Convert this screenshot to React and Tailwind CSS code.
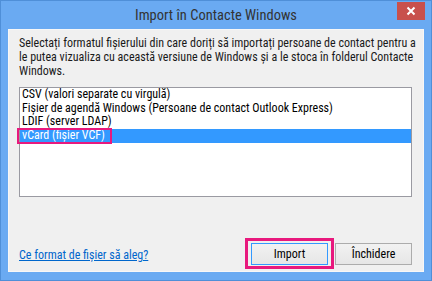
import React from "react";

export default function App() {
  const font = { fontFamily: 'Roboto, "Noto Sans", sans-serif' };
  return (
    <div
      className="w-[432px] h-[281px] bg-[#6aaaf2] border border-[#4f8fd8] flex flex-col overflow-hidden font-stretch-condensed"
      style={font}
    >
      {/* Title bar */}
      <div className="h-[28px] flex items-start shrink-0">
        <div className="flex-1 text-center text-[14.5px] leading-[29px] text-[#333333] pl-[34px]">
          Import în Contacte Windows
        </div>
        <div className="w-[28px] h-[18px] mt-[1px] mr-[6px] bg-[#c8504c] flex items-center justify-center">
          <svg width="10" height="10" viewBox="0 0 10 10">
            <path d="M1.5 1.5 L8.5 8.5 M8.5 1.5 L1.5 8.5" stroke="#fff" strokeWidth="2" />
          </svg>
        </div>
      </div>
      {/* Client */}
      <div className="flex-1 mx-[7px] mb-[8px] bg-[#f0f0f0] border border-[#f7f7f7] flex flex-col pl-[10px] pr-[11px] pt-[6px] pb-[2px]">
        <div className="text-[12px] leading-[14px] text-[#1a1a1a] whitespace-nowrap">
          Selectați formatul fișierului din care doriți să importați persoane de contact pentru a
          <br />
          le putea vizualiza cu această versiune de Windows și a le stoca în folderul Contacte
          <br />
          Windows.
        </div>
        <div className="mt-[9px] h-[110px] bg-white border border-[#9a9aa2] text-[12px] leading-[13.7px] text-black">
          <div className="px-[2px] h-[13.7px]">CSV (valori separate cu virgulă)</div>
          <div className="px-[2px] h-[13.7px]">Fișier de agendă Windows (Persoane de contact Outlook Express)</div>
          <div className="px-[2px] h-[13.7px]">LDIF (server LDAP)</div>
          <div className="relative bg-[#3399ff] text-white h-[13.7px] px-[2px]">
            vCard (fișier VCF)
            <div className="absolute left-[-3px] top-[-1px] w-[95px] h-[16px] border-2 border-[#e8197d]" />
          </div>
        </div>
        <div className="mt-auto flex items-center">
          <a className="text-[12px] text-[#0066cc] underline mt-[3px]">Ce format de fișier să aleg?</a>
          <div className="ml-auto border-[3px] border-[#e8197d] px-[3px] pt-[2px] pb-[1px] mr-[1px]">
            <div className="w-[77px] h-[22px] border border-[#3399ff] bg-gradient-to-b from-[#f2f2f2] to-[#e6e6e6] flex items-center justify-center text-[12px] text-black">
              Import
            </div>
          </div>
          <div className="w-[77px] h-[22px] mt-[1px] border border-[#acacac] bg-gradient-to-b from-[#f2f2f2] to-[#e6e6e6] flex items-center justify-center text-[12px] text-black">
            Închidere
          </div>
        </div>
      </div>
    </div>
  );
}
